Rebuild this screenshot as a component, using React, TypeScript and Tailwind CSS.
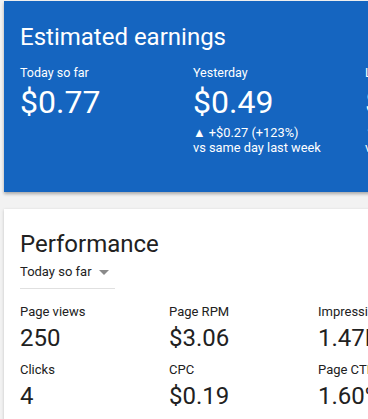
const earnings = [
  { label: 'Today so far', value: '$0.77' },
  {
    label: 'Yesterday',
    value: '$0.49',
    change: '▲ +$0.27 (+123%)',
    note: 'vs same day last week',
  },
  {
    label: 'Last 7 days',
    value: '$3.79',
    change: '▼ -$0.52 (-12%)',
    note: 'vs previous 7 days',
  },
];

const metrics = [
  { label: 'Page views', value: '250' },
  { label: 'Page RPM', value: '$3.06' },
  { label: 'Impressions', value: '1.47K' },
  { label: 'Clicks', value: '4' },
  { label: 'CPC', value: '$0.19' },
  { label: 'Page CTR', value: '1.60%' },
];

export default function App() {
  return (
    <main
      className="h-[419px] w-[368px] overflow-hidden bg-[#f2f2f2]"
      style={{ fontFamily: 'Roboto, "Noto Sans", Arial, sans-serif' }}
    >
      {/* Estimated earnings */}
      <section className="ml-1 mt-px h-[191px] w-[420px] bg-[#1565c0] pl-4 pt-5 text-white shadow-[0_2px_3px_rgba(0,0,0,0.3)]">
        <h2 className="text-[24px] leading-[32px]">Estimated earnings</h2>
        <div className="mt-3 flex">
          {earnings.map((e, i) => (
            <div key={e.label} className={i === 0 ? 'w-[173px] shrink-0' : 'w-[172px] shrink-0'}>
              <div className="text-[12.5px] leading-4">{e.label}</div>
              <div className="mt-px text-[32px] leading-[40px]">{e.value}</div>
              {e.change && (
                <div className="mt-[3px] text-[12.8px] leading-[15px]">
                  <div>{e.change}</div>
                  <div>{e.note}</div>
                </div>
              )}
            </div>
          ))}
        </div>
      </section>

      {/* Performance */}
      <section className="ml-1 mt-[17px] h-[260px] w-[420px] bg-white pl-4 pt-[19px] text-[#212121] shadow-[0_1px_3px_rgba(0,0,0,0.2)]">
        <h2 className="text-[24px] leading-[32px]">Performance</h2>
        <div className="mt-[2px] flex w-[95px] items-center border-b border-[#e0e0e0] pb-[6px] text-[13px] leading-5">
          <span>Today so far</span>
          <span className="ml-[7px] h-0 w-0 border-x-[5px] border-t-[5px] border-x-transparent border-t-[#8a8a8a]" />
        </div>
        <div className="mt-[13px] grid grid-cols-[149px_149px_149px] gap-y-[6px]">
          {metrics.map((m) => (
            <div key={m.label}>
              <div className="text-[13px] leading-5">{m.label}</div>
              <div className="text-[24px] leading-[32px]">{m.value}</div>
            </div>
          ))}
        </div>
      </section>
    </main>
  );
}
